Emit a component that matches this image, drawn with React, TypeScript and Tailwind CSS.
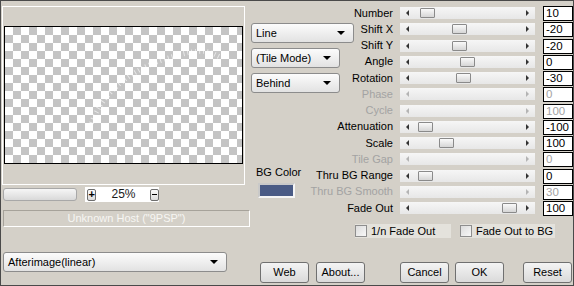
import React from 'react';

type Row = { label: string; value: string; thumb?: number; disabled?: boolean };

const rows: Row[] = [
  { label: 'Number', value: '10', thumb: 20 },
  { label: 'Shift X', value: '-20', thumb: 52 },
  { label: 'Shift Y', value: '-20', thumb: 52 },
  { label: 'Angle', value: '0', thumb: 60 },
  { label: 'Rotation', value: '-30', thumb: 56 },
  { label: 'Phase', value: '0', disabled: true },
  { label: 'Cycle', value: '100', disabled: true },
  { label: 'Attenuation', value: '-100', thumb: 18 },
  { label: 'Scale', value: '100', thumb: 39 },
  { label: 'Tile Gap', value: '0', disabled: true },
  { label: 'Thru BG Range', value: '0', thumb: 18 },
  { label: 'Thru BG Smooth', value: '30', disabled: true },
  { label: 'Fade Out', value: '100', thumb: 102 },
];

function Caret() {
  return (
    <span className="w-0 h-0 border-x-[4px] border-x-transparent border-t-[4px] border-t-black" />
  );
}

function Select({ label, width }: { label: string; width: string }) {
  return (
    <div
      className={`${width} h-[20px] flex items-center justify-between pl-[4px] pr-[8px] rounded-[3px] border border-[#8c8c8c] bg-gradient-to-b from-[#fcfcfc] to-[#e2e2e2]`}
    >
      <span className="text-[11px] leading-none">{label}</span>
      <Caret />
    </div>
  );
}

function Button({ label, width }: { label: string; width: string }) {
  return (
    <div
      className={`${width} h-[21px] flex items-center justify-center rounded-[3px] border border-[#707070] bg-gradient-to-b from-[#f4f4f4] to-[#dadada] text-[11px]`}
    >
      {label}
    </div>
  );
}

function Checkbox({ label, width }: { label: string; width: string }) {
  return (
    <div className={`${width} h-[14px] bg-[#e4e2dc] flex items-center whitespace-nowrap`}>
      <span className="w-[12px] h-[12px] border border-[#8e8e8e] bg-gradient-to-br from-[#dcdcdc] to-[#f8f8f8]" />
      <span className="ml-[4px]">{label}</span>
    </div>
  );
}

function Slider({ row }: { row: Row }) {
  const arrow = row.disabled ? '#b4b4b4' : '#333333';
  return (
    <div className="h-[16.25px] flex items-start">
      <div className="w-[39px] h-[14px] flex justify-end items-center whitespace-nowrap">
        <span className={row.disabled ? 'text-[#a3a3a3]' : 'text-black'}>{row.label}</span>
      </div>
      <div className="relative ml-[7px] mt-[1px] w-[135px] h-[12px] flex items-center justify-between px-[6px] bg-gradient-to-b from-[#f6f6f6] to-[#e7e7e7]">
        <span
          className="w-0 h-0 border-y-[3px] border-y-transparent border-r-[3px]"
          style={{ borderRightColor: arrow }}
        />
        <span
          className="w-0 h-0 border-y-[3px] border-y-transparent border-l-[3px]"
          style={{ borderLeftColor: arrow }}
        />
        {row.thumb !== undefined && (
          <div
            className="absolute top-[1px] w-[15px] h-[10px] rounded-[1px] border border-[#8a8a8a] bg-gradient-to-b from-[#fafafa] to-[#d6d6d6]"
            style={{ left: row.thumb }}
          />
        )}
      </div>
      <div
        className={`ml-[8px] w-[30px] h-[15px] bg-white border border-black pl-[2px] text-[11.5px] leading-[13px] ${
          row.disabled ? 'text-[#a3a3a3]' : 'text-black'
        }`}
      >
        {row.value}
      </div>
    </div>
  );
}

export default function App() {
  return (
    <div className="w-[574px] h-[286px] overflow-hidden flex bg-[#d4d0c8] border border-[#4a4a4a] text-[11px] leading-[13px] text-black font-['Liberation_Sans',Arial,sans-serif]">
      {/* Left: preview + zoom + host + filter select */}
      <div className="w-[250px] flex flex-col">
        <div className="mt-[5px] ml-[1px] w-[243px] h-[179px] border border-white pt-[19px] px-[1px]">
          <div className="relative w-[239px] h-[138px] border border-black bg-[conic-gradient(#c4c4c4_25%,#ffffff_0_50%,#c4c4c4_0_75%,#ffffff_0)] bg-[length:16px_16px]">
            <svg className="absolute inset-0" width="237" height="136" viewBox="0 0 237 136">
              <path
                d="M85 100 C 95 70, 120 45, 160 32 S 205 25, 215 30"
                fill="none"
                stroke="#ffffff"
                strokeOpacity="0.6"
                strokeWidth="5"
                strokeDasharray="1 3"
              />
            </svg>
          </div>
        </div>

        <div className="mt-[2px] h-[15px] flex items-center">
          <div className="ml-[2px] w-[74px] h-[13px] rounded-[3px] border border-[#a8a8a8] bg-gradient-to-b from-[#f6f6f6] to-[#d9d9d9]" />
          <div className="ml-[8px] w-[74px] h-[15px] bg-white flex items-center">
            <div className="ml-[2px] w-[11px] h-[12px] rounded-[2px] border border-[#6e6e6e] bg-gradient-to-b from-[#fafafa] to-[#dcdcdc] flex items-center justify-center font-bold text-[11px] leading-none">
              +
            </div>
            <span className="ml-[15px] text-[12px] text-[#1a1a1a]">25%</span>
            <div className="ml-[14px] w-[11px] h-[12px] rounded-[2px] border border-[#6e6e6e] bg-gradient-to-b from-[#fafafa] to-[#dcdcdc] flex items-center justify-center">
              <span className="w-[5px] h-[1px] bg-black" />
            </div>
          </div>
        </div>

        <div className="mt-[8px] ml-[2px] w-[247px] h-[17px] border border-[#a6a29a] border-b-white border-r-white flex items-center justify-center text-[#f7f6f3]">
          Unknown Host ("9PSP")
        </div>

        <div className="mt-[25px] ml-[2px]">
          <Select label="Afterimage(linear)" width="w-[224px]" />
        </div>
      </div>

      {/* Right side */}
      <div className="flex-1 flex flex-col">
        <div className="flex">
          {/* Mode selects and BG colour */}
          <div className="w-[103px] flex flex-col pt-[22px]">
            <Select label="Line" width="w-[103px]" />
            <div className="mt-[5px]">
              <Select label="(Tile Mode)" width="w-[89px]" />
            </div>
            <div className="mt-[5px]">
              <Select label="Behind" width="w-[89px]" />
            </div>
            <span className="mt-[73px] ml-[5px]">BG Color</span>
            <div className="mt-[4px] ml-[7px] w-[37px] h-[15px] bg-[#4a5b85] border-2 border-[#f5f5f5] border-t-[#c9c9c9] border-l-[#c9c9c9]" />
          </div>

          {/* Sliders */}
          <div className="w-[219px] flex flex-col pt-[5px]">
            {rows.map((row) => (
              <Slider key={row.label} row={row} />
            ))}
          </div>
        </div>

        <div className="mt-[7px] pl-[104px] flex gap-[9px]">
          <Checkbox label="1/n Fade Out" width="w-[96px]" />
          <Checkbox label="Fade Out to BG" width="w-[95px]" />
        </div>

        <div className="mt-[24px] pl-[9px] flex">
          <Button label="Web" width="w-[49px]" />
          <div className="ml-[7px]">
            <Button label="About..." width="w-[49px]" />
          </div>
          <div className="ml-[35px]">
            <Button label="Cancel" width="w-[49px]" />
          </div>
          <div className="ml-[6px]">
            <Button label="OK" width="w-[49px]" />
          </div>
          <div className="ml-[19px]">
            <Button label="Reset" width="w-[49px]" />
          </div>
        </div>
      </div>
    </div>
  );
}
